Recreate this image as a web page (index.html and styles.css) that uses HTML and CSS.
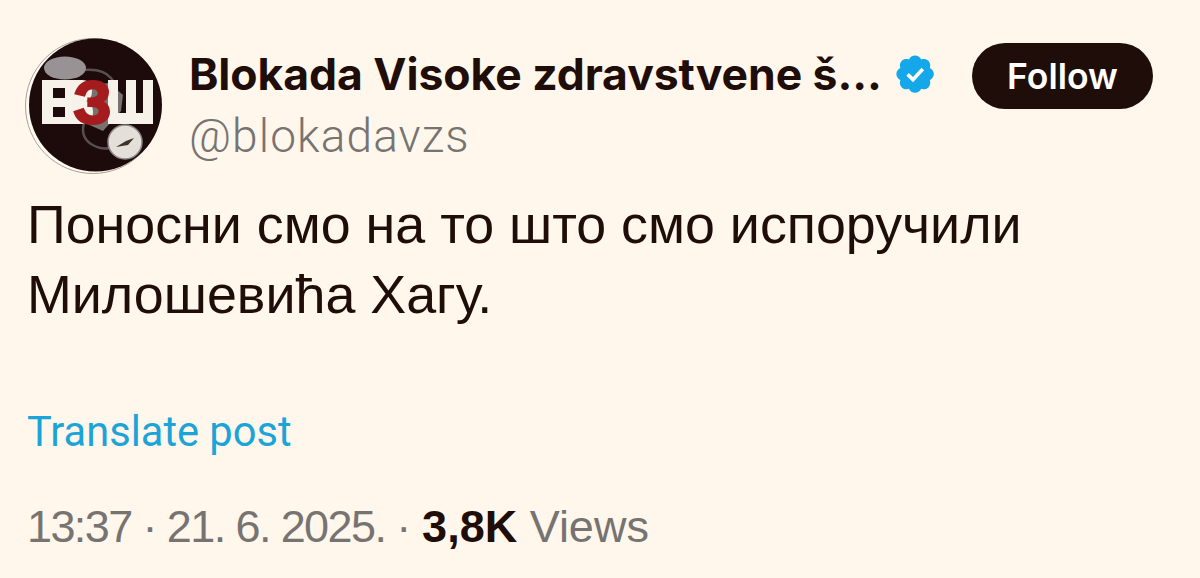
FILE: index.html
```html
<!DOCTYPE html>
<html lang="en">
<head>
<meta charset="UTF-8">
<title>Post</title>
<link rel="stylesheet" href="styles.css">
</head>
<body>
  <div class="post">
    <div class="head">
      <svg class="avatar" viewBox="0 0 140 140" role="img" aria-label="ВЗШ">
        <circle cx="68" cy="70" r="67.500" fill="#fffaf2" stroke="#a8a29a" stroke-width="1"/>
        <circle cx="70.500" cy="69" r="66.500" fill="#1c0b0a"/>
        <g class="avatar-art">
          <path d="M58 34q20-2 28 8 8 10 6 24M60 84q-6 16 6 24 10 6 18 4" fill="none" stroke="#57504f" stroke-width="2.500"/>
          <ellipse cx="40" cy="32" rx="21" ry="11.500" fill="#989294"/>
          <path d="M58 50l26-3 14 12-2 16-18 20-18-8z" fill="#77716f"/>
          <circle cx="100" cy="106" r="17" fill="#e4dfd8" stroke="#8d8688" stroke-width="1.500"/>
          <path d="M91 111l10-6 8-3-6 7z" fill="#3b3331"/>
          <path d="M17 44h40q10 0 10 11 0 8-6 10 7 2 7 11 0 12-11 12H17z" fill="#f7f2e9"/>
          <rect x="28" y="52" width="12" height="10" fill="#1c0b0a"/>
          <rect x="28" y="71" width="12" height="10" fill="#1c0b0a"/>
          <path d="M83 44h10v33h8V44h10v33h7V44h10v44H83z" fill="#f7f2e9"/>
          <text class="avatar-three" x="67.500" y="87" text-anchor="middle">З</text>
        </g>
      </svg>
      <div class="who">
        <div class="name-row">
          <span class="name">Blokada Visoke zdravstvene š...</span>
          <svg class="badge" viewBox="0 0 22 22" aria-label="Verified">
            <path fill="#14a7ea" d="M20.4 11c0-1.300-.8-2.500-2-3 .5-1.200.2-2.600-.7-3.600-1-.9-2.400-1.200-3.600-.7-.6-1.200-1.800-2-3.100-2s-2.500.8-3 2c-1.300-.5-2.700-.2-3.600.7-1 1-1.200 2.400-.7 3.600-1.200.5-2 1.700-2 3s.8 2.500 2 3.100c-.5 1.200-.3 2.600.7 3.600.9.9 2.300 1.200 3.600.7.5 1.200 1.700 2 3 2s2.500-.8 3.100-2c1.200.5 2.600.2 3.600-.7.9-1 1.200-2.400.7-3.600 1.200-.6 2-1.800 2-3.100z"/>
            <path fill="none" stroke="#fff" stroke-width="1.800" d="M7.300 11.200l2.700 2.600 4.900-5.300"/>
          </svg>
        </div>
        <div class="handle">@blokadavzs</div>
      </div>
      <a class="follow" href="#">Follow</a>
    </div>
    <p class="text">Поносни смо на то што смо испоручили<br>Милошевића Хагу.</p>
    <a class="translate" href="#">Translate post</a>
    <div class="meta"><span class="date">13:37 · 21. 6. 2025. ·</span> <b>3,8K</b> Views</div>
  </div>
</body>
</html>
```

FILE: styles.css
```css
:root{
  --bg:#fff7ec;
  --ink:#1f0d09;
  --muted:#777371;
  --link:#1ba4d8;
}
html, body{ height:100%; }
body{
  margin:0;
  background:var(--bg);
  color:var(--ink);
  font-family:"Liberation Sans", Arial, sans-serif;
  overflow:hidden;
}
.post{ padding:36px 47px 0 25px; }
.head{ display:flex; align-items:flex-start; }
.avatar{ width:140px; height:140px; flex:none; }
.avatar-art{ filter:blur(.5px); }
.avatar-three{
  font-family:"Liberation Sans", Arial, sans-serif;
  font-weight:700; font-size:60px; fill:#a51c1e;
  stroke:#a51c1e; stroke-width:3px;
}
.who{ margin-left:24px; flex:1; min-width:0; }
.name-row{ display:flex; align-items:center; height:76px; }
.name{
  font-family:Inter, sans-serif;
  font-weight:700; font-size:44.500px; white-space:nowrap;
  letter-spacing:-.07px;
}
.badge{ width:44px; height:44px; margin-left:11px; flex:none; }
.handle{
  font-family:Roboto, sans-serif; font-weight:300;
  font-size:46px; color:var(--muted); margin-top:1px; line-height:46px;
  letter-spacing:1.100px;
}
.follow{
  flex:none; width:181px; height:66px; margin-top:7px;
  display:flex; align-items:center; justify-content:center;
  background:var(--ink); color:#fff; border-radius:33px;
  font-family:Inter, sans-serif;
  font-weight:600; font-size:35.500px; text-decoration:none;
}
.text{
  margin:14px 0 0 2px;
  font-size:53.800px; line-height:69.500px;
}
.translate{
  display:block; margin:80px 0 0 2px;
  font-family:Roboto, sans-serif;
  font-size:41.600px; line-height:46px; color:var(--link); text-decoration:none;
}
.meta{
  margin:47px 0 0 2px;
  font-size:45px; line-height:50px; color:var(--muted);
  white-space:nowrap;
}
.date{ letter-spacing:-1.600px; }
.meta b{ color:var(--ink); }
```
